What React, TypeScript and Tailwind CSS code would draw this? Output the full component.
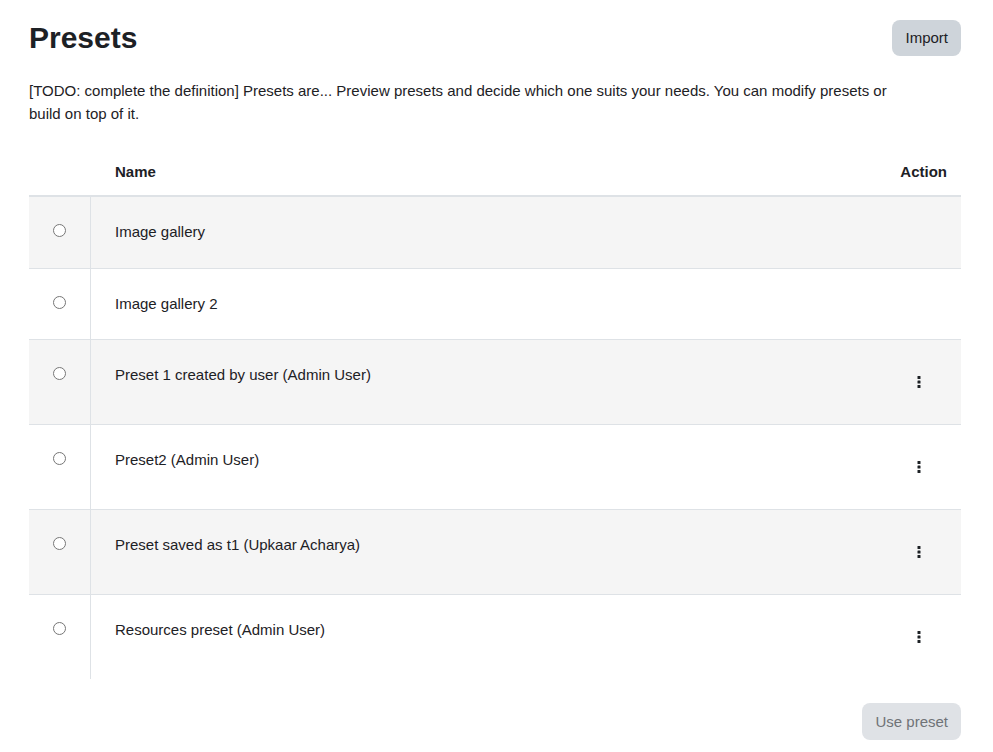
const presets = [
  { name: 'Image gallery', actions: false },
  { name: 'Image gallery 2', actions: false },
  { name: 'Preset 1 created by user (Admin User)', actions: true },
  { name: 'Preset2 (Admin User)', actions: true },
  { name: 'Preset saved as t1 (Upkaar Acharya)', actions: true },
  { name: 'Resources preset (Admin User)', actions: true },
];

function Kebab() {
  return (
    <svg width="4" height="12" viewBox="0 0 4 12" aria-hidden="true">
      <rect x="0.5" y="0" width="3" height="3" rx="0.6" fill="#1d2125" />
      <rect x="0.5" y="4.5" width="3" height="3" rx="0.6" fill="#1d2125" />
      <rect x="0.5" y="9" width="3" height="3" rx="0.6" fill="#1d2125" />
    </svg>
  );
}

export default function App() {
  return (
    <div className="min-h-screen bg-white px-[29px] pt-[20px] font-['Liberation_Sans',Arial,sans-serif] text-[15px] text-[#1d2125]">
      <div className="flex items-start justify-between">
        <h1 className="text-[30px] font-bold leading-[36px]">Presets</h1>
        <button className="mr-[3px] h-[36px] rounded-lg bg-[#ced4da] px-[13px] text-[15px] leading-[22px] text-[#1d2125]">
          Import
        </button>
      </div>

      <p className="mt-[24px] max-w-[880px] leading-[22.5px]">
        [TODO: complete the definition] Presets are... Preview presets and decide which one suits your needs. You can
        modify presets or build on top of it.
      </p>

      <div className="mt-[25px] w-[932px]">
        {/* header */}
        <div className="flex h-[47px] border-b-2 border-[#dee2e6] font-bold leading-[22.5px]">
          <div className="w-[62px]" />
          <div className="flex-1 pl-[24px] pt-[11px]">Name</div>
          <div className="w-[100px] pr-[14px] pt-[11px] text-right">Action</div>
        </div>

        {presets.map((p, i) => (
          <div
            key={p.name}
            className={`flex ${i % 2 === 0 ? 'bg-[#f5f5f5]' : 'bg-white'} ${
              i < presets.length - 1 ? 'border-b border-[#dee2e6]' : ''
            }`}
          >
            <div className="flex w-[62px] justify-center border-r border-[#dee2e6] pt-[27px]">
              <input type="radio" name="preset" className="m-0 h-[13px] w-[13px]" />
            </div>
            <div className="flex-1 py-[24px] pl-[24px] leading-[22.5px]">{p.name}</div>
            <div className="flex w-[100px] justify-end py-[24px] pr-[24px]">
              {p.actions && (
                <button className="flex h-[36px] w-[36px] items-center justify-center">
                  <Kebab />
                </button>
              )}
            </div>
          </div>
        ))}
      </div>

      <div className="mt-[24px] flex w-[932px] justify-end">
        <button
          disabled
          className="h-[37px] rounded-lg bg-[#dfe2e6] px-[13px] text-[15px] leading-[22px] text-[#6f7377]"
        >
          Use preset
        </button>
      </div>
    </div>
  );
}
